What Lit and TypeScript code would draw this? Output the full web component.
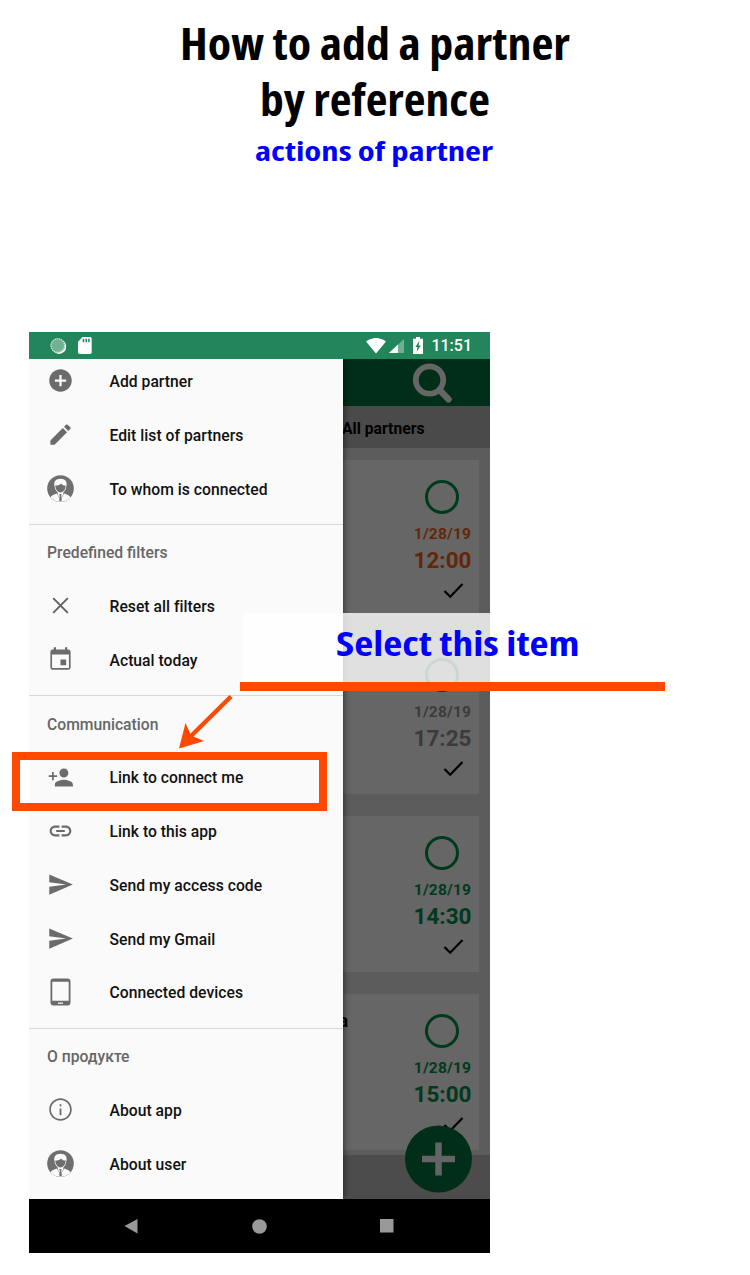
import { LitElement, html, svg, css, type TemplateResult } from "lit";
import { customElement, property } from "lit/decorators.js";

const person = svg`
  <circle cx="13.500" cy="13.500" r="13.300" fill="#6f6f6f"/>
  <path d="M3.600 22.400c.8-2.200 3.600-2.800 6.200-3.800l3.700 6.400 3.700-6.400c2.600 1 5.400 1.600 6.200 3.800a13.300 13.300 0 0 1-19.800 0z" fill="#fafafa"/>
  <path d="M7.600 11.600C6.200 6.500 9 3.800 13.400 3.800c4.700 0 7.300 2.700 5.900 7.800-.3 2.700-1.500 4.500-3 5.900v2l-2.800 5-2.800-5v-2c-1.500-1.400-2.800-3.200-3.100-5.900z" fill="#fafafa"/>
  <path d="M8.300 10.600c2.600-.1 4.500-.8 5.900-2.200.7 1.200 2 1.900 4.400 2.200.2 4-2.600 7-5.100 7s-5.200-3-5.200-7z" fill="#6f6f6f"/>
  <path d="M12.300 19h2.400l-.5 1.700.6 4.800-1.300 1-1.300-1 .6-4.800z" fill="#6f6f6f"/>`;

const ICONS: Record<string, { box: string; size: number; art: TemplateResult }> = {
  add: { box: "0 0 24 24", size: 27, art: svg`<path d="M12 2C6.480 2 2 6.480 2 12s4.480 10 10 10 10-4.480 10-10S17.520 2 12 2zm5 11h-4v4h-2v-4H7v-2h4V7h2v4h4v2z"/>` },
  edit: { box: "0 0 24 24", size: 27, art: svg`<path d="M3 17.250V21h3.750L17.810 9.940l-3.750-3.750L3 17.250zM20.710 7.040a1 1 0 0 0 0-1.410l-2.340-2.340a1 1 0 0 0-1.410 0l-1.830 1.830 3.750 3.750 1.830-1.830z"/>` },
  person: { box: "0 0 27 27", size: 27, art: person },
  close: { box: "0 0 24 24", size: 27, art: svg`<path d="M5.500 5.500l13 13M18.500 5.500l-13 13" fill="none" stroke="#636363" stroke-width="1.700"/>` },
  event: { box: "0 0 24 24", size: 27, art: svg`<path d="M17 12h-5v5h5v-5zM16 1v2H8V1H6v2H5c-1.110 0-1.990.9-1.990 2L3 19a2 2 0 0 0 2 2h14c1.100 0 2-.9 2-2V5c0-1.100-.9-2-2-2h-1V1h-2zm3.500 18.500h-15V7.500h15v12z"/>` },
  personAdd: { box: "0 0 24 24", size: 27, art: svg`<path d="M15 12c2.210 0 4-1.790 4-4s-1.790-4-4-4-4 1.790-4 4 1.790 4 4 4zm-9-2V7H4.500v3h-3v1.500h3v3H6v-3h3V10H6zm9 4c-2.670 0-8 1.340-8 4v2h16v-2c0-2.660-5.330-4-8-4z"/>` },
  link: { box: "0 0 24 24", size: 26, art: svg`<path d="M3.900 12c0-1.710 1.390-3.100 3.100-3.100h4V7H7c-2.760 0-5 2.240-5 5s2.240 5 5 5h4v-1.900H7c-1.710 0-3.100-1.390-3.100-3.100zM8 13h8v-2H8v2zm9-6h-4v1.900h4c1.710 0 3.100 1.390 3.100 3.100s-1.390 3.100-3.100 3.100h-4V17h4c2.760 0 5-2.240 5-5s-2.240-5-5-5z"/>` },
  send: { box: "0 0 24 24", size: 27, art: svg`<path d="M2.010 21L23 12 2.010 3 2 10l15 2-15 2z"/>` },
  tablet: { box: "0 0 24 30", size: 27, art: svg`<path d="M5 1.500h14a3 3 0 0 1 3 3v21a3 3 0 0 1-3 3H5a3 3 0 0 1-3-3v-21a3 3 0 0 1 3-3zM3.800 4.800v19h16.400v-19zM9.500 25.500v1.200h5v-1.200z" fill-rule="evenodd"/>` },
  info: { box: "0 0 24 24", size: 27, art: svg`<path d="M11.200 17h1.600v-6h-1.600v6zM12 2C6.480 2 2 6.480 2 12s4.480 10 10 10 10-4.480 10-10S17.520 2 12 2zm0 18.500c-4.700 0-8.500-3.800-8.500-8.500S7.300 3.500 12 3.500s8.500 3.800 8.500 8.500-3.800 8.500-8.500 8.500zM11.200 9h1.600V7.300h-1.600V9z"/>` },
};

@customElement("fitted-text")
class FittedText extends LitElement {
  @property() text = "";
  @property({ type: Number }) width = 100;
  @property({ type: Number }) size = 30;
  static styles = css`
    :host { display: block; }
    svg { display: block; overflow: visible; }
    text { font-family: "Open Sans", "Noto Sans", sans-serif; font-weight: 700; font-stretch: 87%; fill: currentColor; }
  `;
  render() {
    return html`<svg width=${this.width} height=${this.size}>
      <text x="0" y=${this.size * 0.85} font-size=${this.size} textLength=${this.width} lengthAdjust="spacingAndGlyphs">${this.text}</text>
    </svg>`;
  }
}

@customElement("menu-item")
class MenuItem extends LitElement {
  @property() icon = "add";
  @property() label = "";
  static styles = css`
    :host { display: flex; align-items: center; height: 53.750px; padding-left: 17.500px; gap: 36px; }
    svg { flex: none; width: 27px; fill: #6b6b6b; }
    span { font: 500 15.700px Roboto, sans-serif; color: #111; white-space: nowrap; padding-top: 1.300px; letter-spacing: .02px; }
  `;
  render() {
    const i = ICONS[this.icon];
    return html`<svg viewBox=${i.box} height=${this.icon === "tablet" ? 30 : i.size}>${i.art}</svg><span>${this.label}</span>`;
  }
}

@customElement("task-card")
class TaskCard extends LitElement {
  @property() date = "1/28/19";
  @property() time = "";
  @property() tone = "green";
  @property() name = "";
  static styles = css`
    :host { display: flex; justify-content: space-between; box-sizing: border-box; flex: none; height: 155.500px; margin: 0 11px 22.500px 0; background: #666; }
    .name { font: 700 18px Roboto, sans-serif; color: #000; padding: 16px 0 0 309.500px; width: 40px; white-space: nowrap; }
    .meta { width: 74px; display: flex; flex-direction: column; align-items: center; padding-top: 19.500px; font-family: Roboto, sans-serif; font-weight: 700; }
    .ring { width: 28px; height: 28px; border: 3.300px solid #003a1d; border-radius: 50%; }
    .date { font-size: 15.500px; line-height: 18px; margin-top: 11px; letter-spacing: .2px; padding-left: 1px; }
    .time { font-size: 22.500px; line-height: 26px; margin-top: 4px; padding-left: 1px; }
    .check { margin: 9px 0 0 22px; }
    .green { color: #003a1d; }
    .red { color: #642609; }
    .gray { color: #3b3b3b; }
  `;
  render() {
    return html`<div class="name">${this.name}</div>
      <div class="meta ${this.tone}">
        <div class="ring"></div>
        <div class="date">${this.date}</div>
        <div class="time">${this.time}</div>
        <svg class="check" width="21" height="17"><path d="M1.500 9l5.700 5.700L19.500 2" fill="none" stroke="#000" stroke-width="2.200"/></svg>
      </div>`;
  }
}

@customElement("app-root")
class AppRoot extends LitElement {
  static styles = css`
    :host { display: block; position: relative; width: 750px; height: 1275px; overflow: hidden; background: #fff; font-family: Roboto, sans-serif; }
    .intro { box-sizing: border-box; height: 332px; padding-top: 22px; display: flex; flex-direction: column; align-items: center; color: #000; }
    .second { margin-top: 11px; }
    .sub { margin: 14.500px 3px 0 0; color: #00f; }
    .phone { width: 461px; margin-left: 29px; }
    .status { height: 27px; background: #22855b; display: flex; align-items: center; color: #fff; box-sizing: border-box; padding: 0 18px 0 21px; }
    .status svg { display: block; }
    .sd { margin-left: 11px; }
    .wifi { margin-left: auto; }
    .cell { margin-left: 3px; }
    .battery { margin-left: 9px; }
    .clock { margin-left: 8px; font-size: 16px; font-weight: 500; }
    .screen { height: 840px; position: relative; overflow: hidden; background: #5c5c5c; }
    .board { display: flex; flex-direction: column; height: 100%; }
    .bar { flex: none; height: 47px; background: #002e19; display: flex; justify-content: flex-end; padding-right: 37px; }
    .tabs { flex: none; height: 42px; background: #4a4a4a; margin-bottom: 12px; display: flex; align-items: center; }
    .tab { margin-left: 313px; font-size: 15.700px; font-weight: 700; color: #000; padding-top: 2px; }
    .cards { flex: none; height: 694.500px; overflow: hidden; display: flex; flex-direction: column; }
    .foot { flex: 1; background: #4c4c4c; }
    .fab { position: absolute; left: 376px; top: 766px; }
    .drawer { position: absolute; left: 0; top: 0; width: 313.500px; height: 100%; background: #fafafa; box-shadow: 0 0 7px rgba(0,0,0,.65); }
    .list { margin-top: -5px; }
    .rule { height: 1px; background: #d8d8d8; margin: 8.500px 0 .5px; }
    .heading { height: 53.750px; display: flex; align-items: center; box-sizing: border-box; padding: 1.500px 0 0 18px; font-size: 15.700px; color: #666; font-weight: 500; }
    .nav { height: 54px; background: #000; display: flex; align-items: center; padding-left: 94px; gap: 113px; box-sizing: border-box; }
    .highlight { position: absolute; left: 12px; top: 752px; width: 299px; height: 43px; border: 8px solid #ff4800; }
    .callout { position: absolute; left: 240px; top: 613px; width: 425px; }
    .note { height: 68.500px; margin-left: 2.500px; background: rgba(255,255,255,.8); color: #00f; box-sizing: border-box; padding: 14px 0 0 93px; }
    .line { height: 9.500px; background: #ff4800; }
    .arrow { position: absolute; left: 175px; top: 690px; }
  `;
  render() {
    return html`
      <header class="intro">
        <fitted-text text="How to add a partner" .width=${390} .size=${45}></fitted-text>
        <fitted-text class="second" text="by reference" .width=${230} .size=${45}></fitted-text>
        <fitted-text class="sub" text="actions of partner" .width=${238} .size=${27.5}></fitted-text>
      </header>
      <main class="phone">
        <div class="status">
          <svg width="17" height="18" viewBox="0 0 17 18"><circle cx="9" cy="9.700" r="7.200" fill="#fff"/><circle cx="7.800" cy="8.500" r="7.200" fill="#70b293"/><circle cx="7.800" cy="8.500" r="6.800" fill="none" stroke="#d5e9df" stroke-width="1.300" stroke-dasharray="1.200 1"/></svg>
          <svg class="sd" width="14" height="17" viewBox="0 0 14 17"><path d="M4.500 0H12a1.700 1.700 0 0 1 1.700 1.700v13.600A1.700 1.700 0 0 1 12 17H1.700A1.700 1.700 0 0 1 0 15.300V4.700z" fill="#fff"/><path d="M5.500 1.800v3.500M8.200 1.800v3.500M10.900 1.800v3.500" stroke="#22855b" stroke-width="1.500"/></svg>
          <svg class="wifi" width="20" height="17" viewBox="0 0 20 17"><path d="M0 4.500C5.500-.3 14.500-.3 20 4.500L10 16.500z" fill="#fff"/></svg>
          <svg class="cell" width="15" height="16" viewBox="0 0 15 16"><path d="M15 1v14H0z" fill="#70ae92"/><path d="M9 6.600V15H0z" fill="#fff"/></svg>
          <svg class="battery" width="10" height="17" viewBox="0 0 10 17"><path d="M3 0h4v1.700h3V17H0V1.700h3z" fill="#fff"/><path d="M6.500 3.800L2.300 10h2.200L3.700 14.800 7.900 8.500H5.600z" fill="#22855b"/></svg>
          <span class="clock">11:51</span>
        </div>
        <div class="screen">
          <div class="board">
            <div class="bar"><svg width="43" height="47" viewBox="0 0 43 47"><circle cx="19.500" cy="21" r="13.700" fill="none" stroke="#666" stroke-width="5.800"/><path d="M30 31.500l8.500 8.800" stroke="#666" stroke-width="6.500" stroke-linecap="round"/></svg></div>
            <div class="tabs"><span class="tab">All partners</span></div>
            <div class="cards">
              <task-card time="12:00" tone="red"></task-card>
              <task-card time="17:25" tone="gray"></task-card>
              <task-card time="14:30"></task-card>
              <task-card time="15:00" name="a"></task-card>
            </div>
            <div class="foot"></div>
          </div>
          <svg class="fab" width="68" height="68" viewBox="0 0 68 68"><circle cx="33.500" cy="34" r="33.500" fill="#002e19"/><path d="M33.500 17.500v33M17 34h33" stroke="#646464" stroke-width="6.500"/></svg>
          <nav class="drawer">
            <div class="list">
              <menu-item icon="add" label="Add partner"></menu-item>
              <menu-item icon="edit" label="Edit list of partners"></menu-item>
              <menu-item icon="person" label="To whom is connected"></menu-item>
              <div class="rule"></div>
              <div class="heading">Predefined filters</div>
              <menu-item icon="close" label="Reset all filters"></menu-item>
              <menu-item icon="event" label="Actual today"></menu-item>
              <div class="rule"></div>
              <div class="heading">Communication</div>
              <menu-item icon="personAdd" label="Link to connect me"></menu-item>
              <menu-item icon="link" label="Link to this app"></menu-item>
              <menu-item icon="send" label="Send my access code"></menu-item>
              <menu-item icon="send" label="Send my Gmail"></menu-item>
              <menu-item icon="tablet" label="Connected devices"></menu-item>
              <div class="rule"></div>
              <div class="heading">О продукте</div>
              <menu-item icon="info" label="About app"></menu-item>
              <menu-item icon="person" label="About user"></menu-item>
            </div>
          </nav>
        </div>
        <footer class="nav">
          <svg width="16" height="16"><path d="M1.500 8L14.500 1v14.500z" fill="#999"/></svg>
          <svg width="15" height="15"><circle cx="7.500" cy="7.500" r="7.300" fill="#999"/></svg>
          <svg width="14" height="14"><rect width="13.500" height="13.500" fill="#999"/></svg>
        </footer>
      </main>
      <div class="callout">
        <div class="note"><fitted-text text="Select this item" .width=${243.5} .size=${34}></fitted-text></div>
        <div class="line"></div>
      </div>
      <div class="highlight"></div>
      <svg class="arrow" width="60" height="62"><path d="M56 6.500L15 47" stroke="#ff4800" stroke-width="4.400"/><path d="M4 58.500L10.500 33l5.500 12.500L29 51z" fill="#ff4800"/></svg>
    `;
  }
}
